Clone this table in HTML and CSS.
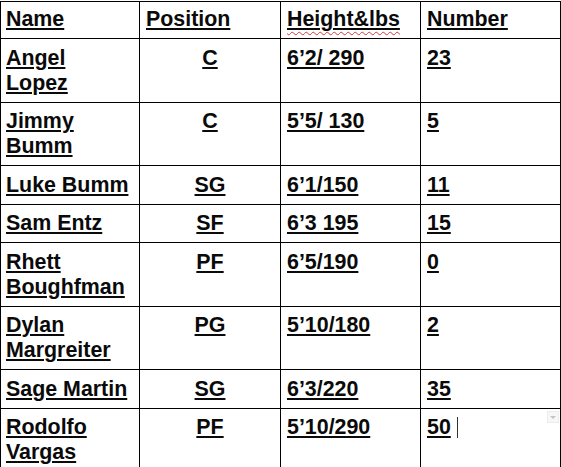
FILE: index.html
```html
<!DOCTYPE html>
<html>
<head>
<meta charset="utf-8">
<link rel="stylesheet" href="styles.css">
</head>
<body>
<table class="roster">
  <colgroup>
    <col class="col-name">
    <col class="col-pos">
    <col class="col-height">
    <col class="col-num">
  </colgroup>
  <thead>
    <tr>
      <th>Name</th>
      <th class="pos-head">Position</th>
      <th><span class="spell">Height&amp;lbs</span></th>
      <th>Number</th>
    </tr>
  </thead>
  <tbody>
    <tr><td>Angel Lopez</td><td class="pos">C</td><td>6’2/ 290</td><td>23</td></tr>
    <tr><td>Jimmy Bumm</td><td class="pos">C</td><td>5’5/ 130</td><td>5</td></tr>
    <tr><td>Luke Bumm</td><td class="pos">SG</td><td>6’1/150</td><td>11</td></tr>
    <tr><td>Sam Entz</td><td class="pos">SF</td><td>6’3 195</td><td>15</td></tr>
    <tr><td>Rhett Boughfman</td><td class="pos">PF</td><td>6’5/190</td><td>0</td></tr>
    <tr><td>Dylan Margreiter</td><td class="pos">PG</td><td>5’10/180</td><td>2</td></tr>
    <tr><td>Sage Martin</td><td class="pos">SG</td><td>6’3/220</td><td>35</td></tr>
    <tr><td>Rodolfo Vargas</td><td class="pos">PF</td><td>5’10/290</td><td class="last-cell">50<span class="caret"></span><span class="dropdown"></span></td></tr>
  </tbody>
</table>
</body>
</html>
```
FILE: styles.css
```css
html, body {
  margin: 0;
  padding: 0;
  background: #ffffff;
}
body {
  padding-top: 1px;
  overflow: hidden;
  height: 467px;
}
.roster {
  border-collapse: collapse;
  table-layout: fixed;
  width: 560px;
  font-family: "Liberation Sans", Arial, sans-serif;
  font-size: 21.4px;
  font-weight: bold;
  line-height: 25px;
  color: #0a0a0a;
}
.col-name { width: 139px; }
.col-pos { width: 141px; }
.col-height { width: 140px; }
.col-num { width: 140px; }
.roster th,
.roster td {
  border: 1px solid #000000;
  padding: 6.5px 8px 6px 5px;
  text-align: left;
  vertical-align: top;
  text-decoration: underline;
  text-decoration-thickness: 2px;
  text-underline-offset: 2px;
  font-weight: bold;
}
.roster th {
  padding-top: 5px;
}
.roster td:nth-child(3),
.roster td:nth-child(4),
.roster th:nth-child(3),
.roster th:nth-child(4) {
  padding-left: 6px;
}
.roster td.pos {
  text-align: center;
  padding-left: 5px;
  padding-right: 5px;
}
.roster th.pos-head {
  padding-left: 6px;
}
.spell {
  text-decoration: underline wavy #d23b3b;
  text-decoration-thickness: 1px;
  text-underline-offset: 5px;
}
.last-cell {
  position: relative;
  height: 60px;
}
.caret {
  display: inline-block;
  width: 1px;
  height: 21px;
  background: #333333;
  margin-left: 6px;
  vertical-align: -4px;
}
.dropdown {
  position: absolute;
  top: 2px;
  right: 1px;
  width: 10px;
  height: 10px;
  border: 1px solid #ececec;
  background: #f7f7f7;
}
.dropdown::after {
  content: "";
  position: absolute;
  left: 2px;
  top: 4px;
  border-left: 3px solid transparent;
  border-right: 3px solid transparent;
  border-top: 3px solid #c4c4c4;
}
```
